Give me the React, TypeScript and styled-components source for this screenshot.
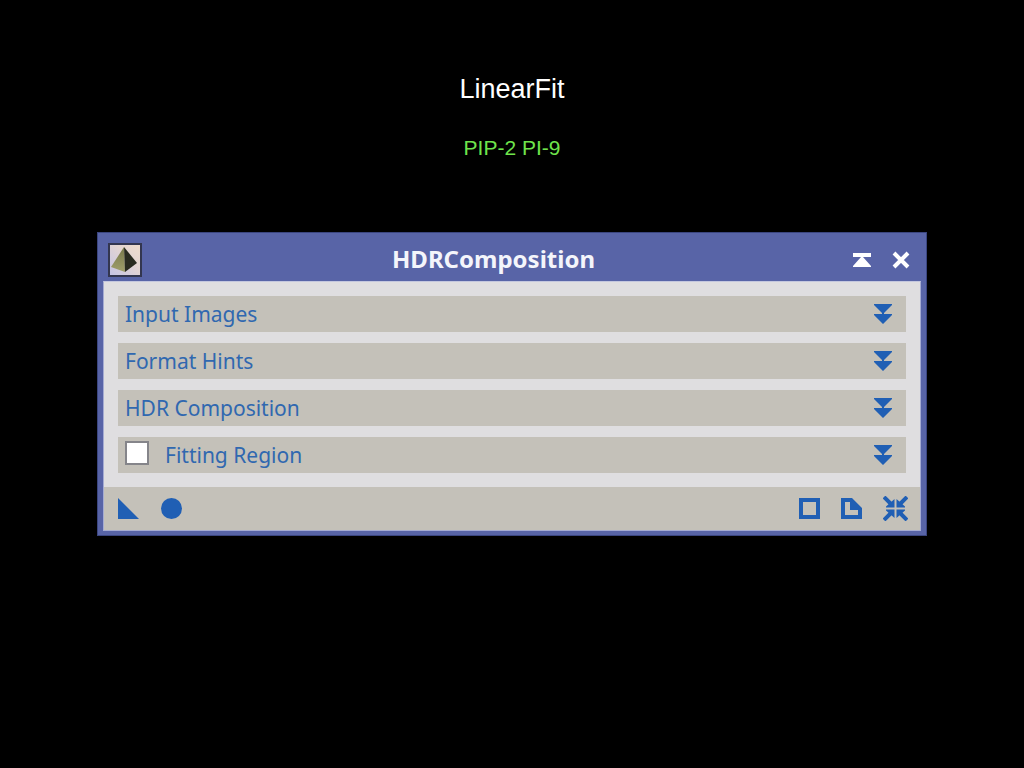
import React from "react";
import styled, { createGlobalStyle } from "styled-components";

const GlobalStyle = createGlobalStyle`
  * { box-sizing: border-box; }
  body { margin: 0; background: #000; }
`;

const Page = styled.main`
  min-height: 100vh;
  padding: 73px 97px 40px;
  background: #000;
  font-family: "Noto Sans", "Open Sans", sans-serif;
`;

const Heading = styled.h1`
  margin: 0;
  text-align: center;
  font: 400 27px/32px "Liberation Sans", Arial, sans-serif;
  color: #fff;
`;

const SubHeading = styled.p`
  margin: 31px 0 72px;
  text-align: center;
  font: 400 21px/24px "Liberation Sans", Arial, sans-serif;
  color: #6fe44c;
`;

const Dialog = styled.section`
  padding: 0 5px 4px;
  border: 1px solid #3b4680;
  background: #5864a7;
`;

const TitleBar = styled.header`
  display: flex;
  align-items: center;
  height: 48px;
  padding: 6px 10px 0 5px;
`;

const Title = styled.h2`
  flex: 1;
  margin: 0;
  padding: 0 8px 2px 0;
  text-align: center;
  font-size: 24px;
  line-height: 32px;
  font-weight: 700;
  color: #f4f5fb;
`;

const Actions = styled.div<{ $gap: number }>`
  display: flex;
  align-items: center;
  gap: ${(p) => p.$gap}px;
`;

const IconButton = styled.button<{ $light?: boolean }>`
  display: flex;
  padding: 0;
  border: 0;
  background: none;
  color: ${(p) => (p.$light ? "#fff" : "#205fb4")};
  cursor: pointer;

  svg {
    display: block;
    fill: currentColor;
  }
`;

const Client = styled.div`
  border: 1px solid #a5abd2;
  border-top-color: #c4c7de;
  background: #dfdee0;
`;

const Sections = styled.div`
  display: grid;
  gap: 11px;
  padding: 14px;
`;

const SectionBar = styled.div`
  display: flex;
  align-items: center;
  height: 36px;
  padding: 0 14px 0 7px;
  background: #c4c1b9;
`;

const SectionLabel = styled.label`
  display: flex;
  flex: 1;
  align-items: center;
  gap: 16px;
  font-size: 21px;
  line-height: 32px;
  color: #3068b0;
`;

const Checkbox = styled.input`
  appearance: none;
  width: 24px;
  height: 24px;
  margin: 0 0 4px;
  border: 2px solid #85858a;
  background: #fff;

  &:checked {
    background: #205fb4;
  }
`;

const Footer = styled.footer`
  display: flex;
  align-items: center;
  justify-content: space-between;
  height: 43px;
  padding: 0 12px 0 14px;
  background: #c4c1b9;
`;

const PyramidIcon = () => (
  <svg width="34" height="34" viewBox="0 0 34 34" aria-hidden="true">
    <defs>
      <linearGradient id="sky" x1="0" y1="1" x2="1" y2="0">
        <stop offset="0" stopColor="#c3c3e6" />
        <stop offset="0.6" stopColor="#e3d5d2" />
        <stop offset="1" stopColor="#efdccb" />
      </linearGradient>
      <linearGradient id="face" x1="0" y1="0" x2="0" y2="1">
        <stop offset="0" stopColor="#77784b" />
        <stop offset="1" stopColor="#a09f6b" />
      </linearGradient>
    </defs>
    <rect x="1" y="1" width="32" height="32" fill="url(#sky)" stroke="#33364f" strokeWidth="2" />
    <path d="M16 4 3 24l14 5z" fill="url(#face)" />
    <path d="M16 4 29 20 17 29z" fill="#292b20" />
  </svg>
);

const ExpandIcon = () => (
  <svg width="18" height="20" viewBox="0 0 18 20" aria-hidden="true">
    <path d="M0 0h18v1l-8 8v1h8v1l-9 9-9-9v-1h8V9L0 1z" />
  </svg>
);

const sections = [
  { name: "Input Images" },
  { name: "Format Hints" },
  { name: "HDR Composition" },
  { name: "Fitting Region", optional: true },
];

export default function App() {
  return (
    <Page>
      <GlobalStyle />
      <Heading>LinearFit</Heading>
      <SubHeading>PIP-2 PI-9</SubHeading>
      <Dialog aria-labelledby="dialog-title">
        <TitleBar>
          <PyramidIcon />
          <Title id="dialog-title">HDRComposition</Title>
          <Actions $gap={21}>
            <IconButton $light type="button" aria-label="Shade window">
              <svg width="18" height="14" viewBox="0 0 18 14">
                <path d="M0 0h18v4h-8l8 9v1H0v-1l8-9H0z" />
              </svg>
            </IconButton>
            <IconButton $light type="button" aria-label="Close">
              <svg width="19" height="18" viewBox="0 0 19 18">
                <path d="m2 2 14 14M16 2 2 16" stroke="currentColor" strokeWidth="4" />
              </svg>
            </IconButton>
          </Actions>
        </TitleBar>
        <Client>
          <Sections>
            {sections.map(({ name, optional }) => (
              <SectionBar key={name}>
                <SectionLabel as={optional ? "label" : "span"}>
                  {optional && <Checkbox type="checkbox" />}
                  {name}
                </SectionLabel>
                <IconButton type="button" aria-label={`Expand ${name}`}>
                  <ExpandIcon />
                </IconButton>
              </SectionBar>
            ))}
          </Sections>
          <Footer>
            <Actions $gap={22}>
              <IconButton type="button" aria-label="New instance">
                <svg width="21" height="21" viewBox="0 0 21 21">
                  <path d="M0 0v21h21z" />
                </svg>
              </IconButton>
              <IconButton type="button" aria-label="Apply global">
                <svg width="21" height="21" viewBox="0 0 21 21">
                  <circle cx="10.5" cy="10.5" r="10.5" />
                </svg>
              </IconButton>
            </Actions>
            <Actions $gap={21}>
              <IconButton type="button" aria-label="Browse documentation">
                <svg width="21" height="21" viewBox="0 0 21 21">
                  <path fillRule="evenodd" d="M0 0h21v21H0zM4 4v13h13V4z" />
                </svg>
              </IconButton>
              <IconButton type="button" aria-label="Edit instance source">
                <svg width="21" height="21" viewBox="0 0 21 21">
                  <path fillRule="evenodd" d="M0 0h11l10 10v11H0zM4 4v13h13v-5H9V4z" />
                </svg>
              </IconButton>
              <IconButton type="button" aria-label="Reset">
                <svg width="25" height="25" viewBox="0 0 25 25">
                  <path d="m1 1 8 8M24 1l-8 8M1 24l8-8M24 24l-8-8" stroke="currentColor" strokeWidth="4" />
                  <path d="M11.5 3v8.5H3v-1zM13.5 3v8.5H22v-1zM11.5 22v-8.5H3v1zM13.5 22v-8.5H22v1z" />
                </svg>
              </IconButton>
            </Actions>
          </Footer>
        </Client>
      </Dialog>
    </Page>
  );
}
